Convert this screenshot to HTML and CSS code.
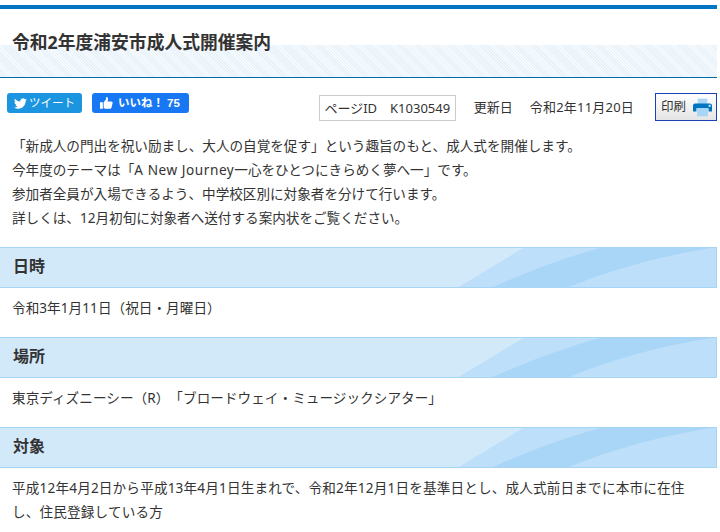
FILE: index.html
```html
<!DOCTYPE html>
<html lang="ja">
<head>
  <meta charset="UTF-8">
  <title>令和2年度浦安市成人式開催案内</title>
  <link rel="stylesheet" href="styles.css">
</head>
<body>
  <div class="page">
    <h1 class="page-title">令和2年度浦安市成人式開催案内</h1>

    <div class="tools">
      <div class="share">
        <a class="btn-tweet" href="#">
          <svg class="icon-bird" viewBox="0 0 24 24"><path d="M23.6 4.6c-.9.4-1.8.7-2.8.8 1-.6 1.8-1.5 2.1-2.7-.9.6-2 1-3.100 1.200a4.900 4.900 0 0 0-8.300 4.400C7.500 8.100 4 6.200 1.600 3.200c-1.300 2.200-.6 5.100 1.500 6.500-.8 0-1.500-.2-2.200-.6 0 2.300 1.600 4.400 3.900 4.900-.7.2-1.500.2-2.200.1.600 2 2.400 3.400 4.600 3.400A9.800 9.800 0 0 1 0 19.500 13.900 13.900 0 0 0 7.500 21.700c9.100 0 14.300-7.700 14-14.600 1-.7 1.800-1.500 2.100-2.500z"/></svg>
          ツイート
        </a>
        <a class="btn-like" href="#">
          <svg class="icon-thumb" viewBox="0 0 16 16"><path d="M0 7h3.500v8H0zM4.500 7.200 7.500 3.500V.8c1.500-.4 2.700.8 2.300 2.800L9.300 6H14c1.200 0 1.800 1 1.500 2l-1.400 5.800c-.2.800-.8 1.200-1.500 1.200H6.500l-2-.8z"/></svg>
          <b>いいね！</b><b class="like-count">75</b>
        </a>
      </div>
      <div class="meta">
        <span class="page-id">ページID　K1030549</span>
        <span class="updated">更新日</span>
        <span class="updated-date">令和2年11月20日</span>
        <a class="btn-print" href="#">
          印刷
          <svg class="icon-print" viewBox="0 0 28 26">
            <rect x="7" y="0" width="14" height="8" fill="#a9d5f7"/>
            <path d="M3 7h22a3 3 0 0 1 3 3v9h-5v-5H5v5H0v-9a3 3 0 0 1 3-3z" fill="#0075c2"/>
            <rect x="23" y="9" width="3" height="3" fill="#d2e9fa"/>
            <rect x="6" y="14" width="16" height="12" fill="#a9d5f7"/>
          </svg>
        </a>
      </div>
    </div>

    <div class="intro">
      <p>「新成人の門出を祝い励まし、大人の自覚を促す」という趣旨のもと、成人式を開催します。</p>
      <p>今年度のテーマは「<span class="latin">A New Journey</span>一心をひとつにきらめく夢へ一」です。</p>
      <p>参加者全員が入場できるよう、中学校区別に対象者を分けて行います。</p>
      <p>詳しくは、12月初旬に対象者へ送付する案内状をご覧ください。</p>
    </div>

    <h2 class="section-title">日時</h2>
    <p class="section-text">令和3年1月11日（祝日・月曜日）</p>

    <h2 class="section-title">場所</h2>
    <p class="section-text">東京ディズニーシー（R）「ブロードウェイ・ミュージックシアター」</p>

    <h2 class="section-title">対象</h2>
    <p class="section-text section-text-long">平成12年4月2日から平成13年4月1日生まれで、令和2年12月1日を基準日とし、成人式前日までに本市に在住し、住民登録している方</p>
  </div>
</body>
</html>
```

FILE: styles.css
```css
html {
  overflow: hidden;
}

body {
  margin: 0;
  background: #fff;
  color: #333;
  font-family: "Noto Sans", "Noto Sans CJK JP", sans-serif;
  font-size: 13.6px;
  line-height: 24px;
  text-spacing-trim: space-all;
}

a {
  text-decoration: none;
}

.page {
  width: 717px;
  margin-top: 5px;
  border-top: 4px solid #0075c2;
}

/* タイトル */
.page-title {
  margin: 0;
  height: 69px;
  box-sizing: border-box;
  padding: 19px 12px 0;
  border-bottom: 1px solid #0068ad;
  font-size: 17.8px;
  line-height: 28px;
  font-weight: bold;
  background-image: repeating-linear-gradient(45deg, #e6f1fa 0 1px, #f8fbfe 1px 2px);
  background-size: 100% 32px;
  background-position: bottom;
  background-repeat: no-repeat;
}

/* ボタン、ページ情報 */
.tools {
  display: flex;
  justify-content: space-between;
  align-items: flex-start;
  padding: 15px 0 0 7px;
  height: 56px;
  box-sizing: border-box;
}

.share {
  display: flex;
  gap: 10px;
}

.btn-tweet,
.btn-like {
  display: flex;
  align-items: center;
  height: 20px;
  border-radius: 3px;
  color: #fff;
  font-size: 11.5px;
  line-height: 20px;
}

.btn-tweet {
  width: 75px;
  box-sizing: border-box;
  padding-left: 7px;
  gap: 2px;
  background: #1b95e0;
}

.btn-like {
  width: 97px;
  box-sizing: border-box;
  padding-left: 8px;
  gap: 5px;
  background: #1877f2;
}

.like-count {
  font-family: "Liberation Sans", sans-serif;
  margin-left: -2px;
}

.icon-bird {
  width: 13px;
  height: 13px;
  fill: #fff;
}

.icon-thumb {
  width: 13px;
  height: 14px;
  fill: #fff;
}

.meta {
  display: flex;
  align-items: center;
  font-size: 13px;
}

.page-id {
  width: 137px;
  height: 26px;
  box-sizing: border-box;
  margin-top: 1px;
  border: 1px solid #ccc;
  text-align: center;
  line-height: 24px;
}

.updated {
  margin-left: 18px;
}

.updated-date {
  margin-left: 17px;
  letter-spacing: 0.2px;
}

.btn-print {
  display: flex;
  align-items: center;
  justify-content: space-between;
  width: 62px;
  height: 28px;
  box-sizing: border-box;
  margin-left: 21px;
  padding: 0 4px 0 5px;
  border: 1px solid #1a3fb8;
  background: linear-gradient(#fff, #e4e4e4);
  color: #333;
  font-size: 12.5px;
}

.icon-print {
  width: 19px;
  height: 19px;
}

/* 本文 */
.intro {
  padding: 0 12px 17px;
}

.intro p {
  margin: 0;
}

.latin {
  letter-spacing: 0.55px;
}

.section-title {
  margin: 0;
  height: 41px;
  box-sizing: border-box;
  padding-left: 13px;
  border-top: 1px solid #a5d4f5;
  border-bottom: 1px solid #a5d4f5;
  border-right: 1px solid #a5d4f5;
  font-size: 16px;
  line-height: 37px;
  font-weight: bold;
  background-color: #d2e9fa;
  background-image: url("data:image/svg+xml,%3Csvg xmlns='http://www.w3.org/2000/svg' width='260' height='40'%3E%3Cpath d='M1 40 68 0H260V40Z' fill='%23bddffa'/%3E%3Cpath d='M35 40Q90 15 146 0H258Q180 12 110 40Z' fill='%23a9d5f7'/%3E%3C/svg%3E");
  background-repeat: no-repeat;
  background-position: right center;
}

.section-text {
  margin: 0;
  padding: 8px 20px 17px 12px;
  letter-spacing: 0.05px;
}

.section-text-long {
  letter-spacing: 0.17px;
}
```
